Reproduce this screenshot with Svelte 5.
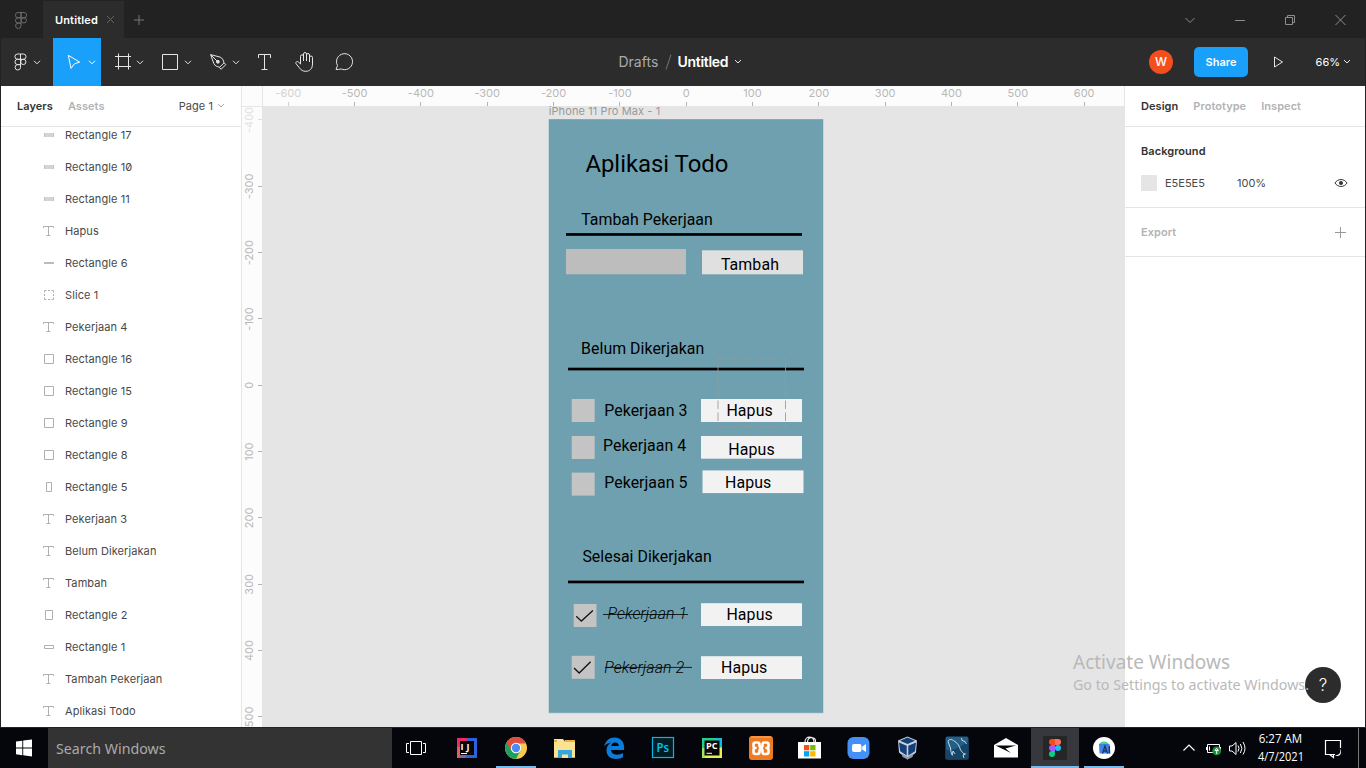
<script>
  const layers = [
    ['flat', 'Rectangle 17'], ['flat', 'Rectangle 10'], ['flat', 'Rectangle 11'], ['text', 'Hapus'],
    ['line', 'Rectangle 6'], ['slice', 'Slice 1'], ['text', 'Pekerjaan 4'], ['square', 'Rectangle 16'],
    ['square', 'Rectangle 15'], ['square', 'Rectangle 9'], ['square', 'Rectangle 8'], ['tall', 'Rectangle 5'],
    ['text', 'Pekerjaan 3'], ['text', 'Belum Dikerjakan'], ['text', 'Tambah'], ['portrait', 'Rectangle 2'],
    ['wide', 'Rectangle 1'], ['text', 'Tambah Pekerjaan'], ['text', 'Aplikasi Todo']
  ];
  const step = 66.33;
  const hTicks = Array.from({ length: 13 }, (_, i) => ({ label: (i - 6) * 100, pos: 686.2 + (i - 6) * step }));
  const vTicks = Array.from({ length: 10 }, (_, i) => ({ label: (i - 4) * 100, pos: 385.3 + (i - 4) * step }));

  const boxes = [
    [566, 249, 120, 25.3, '#bdbdbd'], [702, 250.3, 101, 24, '#e0e0e0'],
    [571.7, 399, 23, 23, '#c4c4c4'], [701, 399, 101, 23, '#f2f2f2'],
    [571.7, 436, 23, 23, '#c4c4c4'], [701, 436, 101, 22.7, '#f2f2f2'],
    [571.7, 472.6, 23, 23, '#c4c4c4'], [702.5, 470.4, 101, 22.7, '#f2f2f2'],
    [573.7, 604, 22.8, 23, '#c4c4c4'], [701, 603.2, 101, 22.8, '#f2f2f2'],
    [571.7, 655.8, 23, 23, '#c4c4c4'], [701, 656.2, 101, 22.8, '#f2f2f2'],
    [566, 233.1, 236, 2.7, '#000'], [568, 367.7, 236, 2.7, '#000'], [568, 580.6, 236, 2.7, '#000']
  ];
  const labels = [
    ['Tambah Pekerjaan', 581.2, 225.2, 131.6], ['Tambah', 720.9, 270.4, 58],
    ['Belum Dikerjakan', 581.1, 354.4, 123.2], ['Pekerjaan 3', 604.3, 416.4, 83.1],
    ['Pekerjaan 4', 603, 450.8, 83.1], ['Pekerjaan 5', 604.3, 488, 83.1],
    ['Hapus', 726.4, 415.5, 46.3], ['Hapus', 728.3, 454.9, 46.3], ['Hapus', 725, 487.5, 46.3],
    ['Selesai Dikerjakan', 582.4, 562.4, 129.3], ['Hapus', 726.4, 619.5, 46.3], ['Hapus', 721, 672.6, 46.3]
  ];
  const apps = ['idea', 'chrome', 'explorer', 'edge', 'ps', 'pycharm', 'xampp', 'store', 'zoom', 'vbox', 'mysql', 'mail', 'figma', 'studio'];
</script>

{#snippet figmaLine(x, y)}
  <g transform="translate({x} {y})">
    <path d="M6 .5H3.1a2.6 2.6 0 0 0 0 5.3H6zM6 .5h2.9a2.6 2.6 0 0 1 0 5.3H6zM6 5.8H3.1a2.6 2.6 0 0 0 0 5.3H6zM6 11.1H3.1A2.7 2.7 0 1 0 6 13.8z" />
    <circle cx="8.8" cy="8.4" r="2.65" />
  </g>
{/snippet}
{#snippet chev(x, y)}<path d="M{x} {y}l3 3 3-3" />{/snippet}

<div class="screen">
  <div class="tabs">
    <svg class="logo" width="42" height="38">{@render figmaLine(15, 12)}</svg>
    <div class="tab"><span>Untitled</span><svg width="9" height="9"><path d="M1 1l7 7M8 1l-7 7" /></svg></div>
    <svg class="plus" width="30" height="38"><path d="M10 20h10M15 15v10" /></svg>
    <svg class="win" width="200" height="38">
      <path d="M19.5 18l4.5 4.5 4.5-4.5M69 20.5h10M119.5 17.5h7v7h-7zM121.5 17.5v-2h7v7h-2M169.5 15l10 10M179.5 15l-10 10" />
    </svg>
  </div>

  <div class="tools">
    <svg width="52" height="48">{@render figmaLine(13.5, 15.5)}{@render chev(33, 22.8)}</svg>
    <svg class="on" width="48" height="48"><path d="M15.3 17.3l11.4 6.8-5.3 1.7-3.4 4.6z" />{@render chev(36, 22.8)}</svg>
    <svg width="48" height="48"><path d="M14 18.5h16M14 28.5h16M17.5 15.5v16M27.5 15.5v16" />{@render chev(36, 22.8)}</svg>
    <svg width="48" height="48"><path d="M13.5 16.5h15v15h-15z" />{@render chev(36, 22.8)}</svg>
    <svg width="48" height="48">
      <path d="M13.600 16.600l9.500 2.500c2.400.9 3.400 3.200 3.900 5.800l-4.300 4.300c-2.600-.4-5-1.500-5.900-3.700zM14 17l6 6M27.100 24.900l1.700 1.700-4.700 4.700-1.700-1.900" />
      <circle cx="20.900" cy="23.800" r="1.400" class="dot" />{@render chev(36, 22.8)}
    </svg>
    <svg width="40" height="48"><path d="M13.500 20v-3.500h12v3.500M19.500 16.500v15M16.500 31.500h6" /></svg>
    <svg width="40" height="48">
      <path d="M15.500 26v-7.700a1.400 1.400 0 0 1 3 0V23v-7a1.400 1.400 0 0 1 3 0V23v-6a1.400 1.400 0 0 1 3 0V24v-4.500a1.400 1.400 0 0 1 3 0v6.500c0 4.700-2.800 7.300-6.700 7.300-3 0-4.600-1.100-6.200-3.200l-3.600-4.500c-.8-1.700 1.200-2.700 2.500-1.500z" />
    </svg>
    <svg width="40" height="48"><path d="M11 31.500l1.500-4a8 8 0 1 1 3.600 3.400c-1.700.6-3.400.7-5.100.6z" /></svg>
    <div class="crumb">
      <span class="drafts">Drafts</span>
      <svg width="7" height="16"><path d="M1 15.500L6 .5" /></svg>
      <b>Untitled</b>
      <svg class="cc" width="8" height="6">{@render chev(1, 1)}</svg>
    </div>
    <div class="right">
      <span class="avatar">W</span>
      <span class="share">Share</span>
      <svg class="play" width="11" height="14"><path d="M1.500 2l8 5-8 5z" /></svg>
      <span class="pct">66%</span>
      <svg width="8" height="6">{@render chev(1, 1)}</svg>
    </div>
  </div>

  <div class="main">
    <div class="left">
      <div class="head"><b>Layers</b><b class="dim">Assets</b><span>Page 1</span><svg width="8" height="6">{@render chev(1, 1)}</svg></div>
      <div class="list">
        {#each layers as [kind, name]}
          <div class="row">
            <svg width="12" height="12">
              {#if kind === 'flat'}<path class="f" d="M1 4h10v4H1z" /><path class="s" d="M1 4h1v4H1zM10 4h1v4h-1z" />
              {:else if kind === 'text'}<path d="M.5 3V1.500h10V3M5.500 1.500v9M3.500 10.500h4" />
              {:else if kind === 'line'}<path class="e" d="M1 5h10v2H1z" />
              {:else if kind === 'slice'}<path d="M1.500 3.500v-2h2M8.500 1.500h2v2M10.500 8.500v2h-2M3.500 10.500h-2v-2M5 1.500h2M5 10.500h2M1.500 5v2M10.500 5v2" />
              {:else if kind === 'square'}<path d="M1.500 1.500h9v9h-9z" />
              {:else if kind === 'tall'}<path d="M3.500 1.500h5v9h-5z" />
              {:else if kind === 'portrait'}<path d="M2.500 1.500h7v9h-7z" />
              {:else}<path d="M1.500 4.500h9v3h-9z" />{/if}
            </svg>
            <span class:zero={name.endsWith('10')}>{name}</span>
          </div>
        {/each}
      </div>
    </div>

    <svg class="canvas" width="883" height="641" viewBox="242 86 883 641">
      <rect x="242" y="86" width="883" height="641" fill="#e5e5e5" />
      <rect x="548.5" y="119" width="275" height="594.3" fill="#a9c5cc" />
      <rect x="549" y="119.300" width="274" height="593.400" fill="#6fa0af" />
      <text x="548.700" y="115" class="inter" fill="#999" textLength="111.500">iPhone 11 Pro Max - 1</text>
      {#each boxes as [x, y, w, h, fill]}<rect {x} {y} width={w} height={h} {fill} />{/each}
      <text x="585.400" y="172" font-size="23.900" textLength="143">Aplikasi Todo</text>
      {#each labels as [t, x, y, w]}<text {x} {y} textLength={w}>{t}</text>{/each}
      <text x="607.500" y="618.600" class="done" textLength="79.500">Pekerjaan 1</text>
      <text x="604.200" y="672.500" class="done" textLength="80">Pekerjaan 2</text>
      <path d="M603 614.500h85M605 667.400h87" stroke="#000" stroke-width=".8" />
      <path d="M576.200 616.200l5.200 4.900 11.500-10.500M574 668l5.200 5 11.400-11.300" fill="none" stroke="#111" stroke-width="1.300" />
      <path d="M718 358.500h68M718 426.500h68" stroke="#999" stroke-opacity=".75" stroke-width=".8" stroke-dasharray="7.500 5.500" />
      <path d="M718 358.500v68M785.500 358.500v68" stroke="#999" stroke-opacity=".85" stroke-width="1" stroke-dasharray="8.500 3.500" stroke-dashoffset="6" />

      <rect x="242" y="86" width="882" height="20" fill="#fcfcfc" />
      <rect x="242" y="86" width="20" height="641" fill="#fcfcfc" />
      <path d="M242 106.500h21M262.500 86v20M1124.500 86v641" stroke="#e5e5e5" />
      {#each hTicks as t, i}
        <rect x={Math.floor(t.pos)} y="102" width="1" height="4" fill="#b3b3b3" opacity={i ? 1 : 0.6} />
        <text class="ruler" x={t.pos} y="97.200" text-anchor="middle" opacity={i ? 1 : 0.6}>{t.label}</text>
      {/each}
      {#each vTicks as t, i}
        <rect x="258" y={Math.floor(t.pos)} width="4" height="1" fill="#b3b3b3" opacity={i ? 1 : 0.4} />
        <text class="ruler" transform="translate(253.300 {t.pos}) rotate(-90)" text-anchor="middle" opacity={i ? 1 : 0.4}>{t.label}</text>
      {/each}
    </svg>

    <div class="props">
      <div class="head"><b>Design</b><b class="dim">Prototype</b><b class="dim">Inspect</b></div>
      <div class="bg">
        <b>Background</b>
        <div class="fill">
          <i></i><span class="hex">E5E5E5</span><span>100%</span>
          <svg width="14" height="10"><path d="M1 5c2.700-4.600 9.300-4.600 12 0-2.700 4.600-9.300 4.600-12 0z" fill="none" stroke="#333" /><circle cx="7" cy="5" r="2" fill="#333" /></svg>
        </div>
      </div>
      <div class="export"><b>Export</b><svg width="11" height="11"><path d="M0 5.500h11M5.500 0v11" stroke="#999" /></svg></div>
    </div>
  </div>

  <div class="taskbar">
    <svg width="48" height="40"><path d="M16 13.600l6.300-.9v6.800H16zM23.200 12.600l8.800-1.100v8H23.200zM16 20.400h6.300v6.800l-6.300-.9zM23.200 20.400H32v8l-8.800-1.100z" fill="#fff" /></svg>
    <svg class="search" width="344" height="40"><text x="8" y="25.700" textLength="109.500" lengthAdjust="spacingAndGlyphs">Search Windows</text></svg>
    <svg width="50" height="40" fill="none" stroke="#fff"><path d="M18.500 13.500h11v13h-11zM17 15.500h-2.500v9H17M31 15.500h2.500v9H31" /></svg>
    {#each apps as app}
      <svg class="app" class:active={app === 'figma'} width="48" height="40" viewBox="0 0 48 40">
        {#if app === 'idea'}
          <path d="M14 10h20v20H14z" fill="#2d62dc" /><path d="M14 10h11l-4 8-7 4z" fill="#ee2a64" /><path d="M14 19h8v11h-8z" fill="#d9645e" /><path d="M18 26h7l-4 4h-5z" fill="#9558a8" />
          <rect x="17" y="13" width="14" height="14" fill="#070707" /><text x="17.500" y="21.700" class="logo-text" textLength="9">IJ</text><path d="M18 25.500h6" stroke="#fff" />
        {:else if app === 'chrome'}
          <circle cx="24" cy="20" r="11" fill="#fbc94b" /><path d="M14.500 14.500A11 11 0 0 0 24 31l4.500-8.500-4.500-2.500z" fill="#1aa15e" /><path d="M14.500 14.500A11 11 0 0 1 34 15.400H24l-5 7z" fill="#dc5044" />
          <circle cx="24" cy="20" r="5.200" fill="#fff" /><circle cx="24" cy="20" r="4.200" fill="#4c8bf5" />
        {:else if app === 'explorer'}
          <path d="M13 11h9l1.500 2H34v17H13z" fill="#fce391" /><path d="M13 12h3v2h-3zM24 12h10v2H23z" fill="#e6b341" /><path d="M17 22h14v8h-4v-3.500h-6V30h-4z" fill="#34a7df" /><path d="M13 29h4v1h-4zM31 29h3v1h-3z" fill="#d9a93c" />
        {:else if app === 'edge'}
          <path d="M14 18.500C15.500 12.800 19.500 9.500 24.600 9.500c6 0 9.500 4.500 9.500 9.500v3H21c.2 3 2.700 4.700 6 4.700 2.300 0 4.300-.600 6-1.600v4.200c-2 1.100-4.300 1.600-7 1.600-5.500 0-9.500-3.200-9.500-8.500 0-3.300 1.700-6 4.600-7.800-2.700.300-5 1.500-7.100 3.900zM21.200 18h7.600c0-2.300-1.300-3.600-3.700-3.600-2.100 0-3.500 1.400-3.900 3.600z" fill="#0c7cdb" />
        {:else if app === 'ps'}
          <rect x="13.500" y="9.500" width="21" height="20" fill="#001d26" stroke="#00b9e6" stroke-width="1.200" /><text x="17.500" y="24" class="ps" textLength="12.500" lengthAdjust="spacingAndGlyphs">Ps</text>
        {:else if app === 'pycharm'}
          <path d="M14 10h20v20H14z" fill="#21d08a" /><path d="M28 10h6v10h-6z" fill="#12bce7" /><path d="M34 19v11H14l5-5z" fill="#e8f04a" /><path d="M14 20h4l-1 10h-3z" fill="#9de75b" />
          <rect x="16.500" y="12.500" width="15" height="15" fill="#070707" /><text x="18" y="21.300" class="logo-text" textLength="11.500" lengthAdjust="spacingAndGlyphs">PC</text><path d="M18.500 25.300h5.500" stroke="#fff" />
        {:else if app === 'xampp'}
          <rect x="12" y="8" width="24" height="24" rx="3" fill="#ee7b22" /><path d="M14 9h20" stroke="#ffb36e" />
          <path d="M18.500 14.500h2q2 0 2 2v2h3v-2q0-2 2-2h2q2 0 2 2v1.500q0 2-2 2 2 0 2 2V24q0 2-2 2h-2q-2 0-2-2v-2h-3v2q0 2-2 2h-2q-2 0-2-2v-2q0-2 2-2-2 0-2-2v-1.500q0-2 2-2z" fill="#ee7b22" stroke="#fff" stroke-width="2.600" stroke-linejoin="round" /><path d="M22 18.500h4v3.500h-4z" fill="#fff" />
        {:else if app === 'store'}
          <path d="M12 14h23v16.500H12z" fill="#fff" /><path d="M19 14c0-6.500 9-6.500 9 0M21.500 14c0-6.500 9-5.500 8 0" fill="none" stroke="#eee" stroke-width="1.200" />
          <path d="M18 17h5.300v5.300H18z" fill="#f25022" /><path d="M24.200 17h5.300v5.300h-5.300z" fill="#7fba00" /><path d="M18 23.200h5.300v5.300H18z" fill="#00a4ef" /><path d="M24.200 23.200h5.300v5.300h-5.300z" fill="#ffb900" />
        {:else if app === 'zoom'}
          <rect x="12.500" y="9" width="22" height="22" rx="6" fill="#4590f7" /><rect x="17" y="16" width="9.500" height="8" rx="2" fill="#fff" /><path d="M27.200 18.800L31 16v8l-3.800-2.600z" fill="#fff" />
        {:else if app === 'vbox'}
          <path d="M23.500 8.500l9.500 4-1 12-8.500 7-8.500-7-1-12z" fill="#c8d1e0" /><path d="M23.500 9.500l7.500 3.200-7.500 3.300-7.500-3.300zM15 14.500l7.700 3.300v9.700l-6.500-4.300zM24.300 17.800l7.700-3.300-1 8.700-6.700 4.300z" fill="#143f78" /><path d="M17.500 25.500l6 3.500 6-3.500-1 3.500-5 2.500-5-2.500z" fill="#8e96a8" />
        {:else if app === 'mysql'}
          <rect x="12.500" y="8.500" width="23" height="23" rx="2" fill="#235f87" /><path d="M12.500 22c8 1 15-3 23-9v18.500h-23z" fill="#164568" />
          <path d="M19.500 27.500l-1.500-3.500-.5-4-2-5c-1.300-3.500 2-4.500 5-2.500 3.500 2 6 5 7 9.500l3 3.500 2 .5-2.500 1 1 3M22 26l-2-3-1 4M28.500 10l.5 2.500 3 1 1.500 2.500" fill="none" stroke="#d6e4ed" stroke-width=".9" />
        {:else if app === 'mail'}
          <path d="M12 17l12-7 12 7v12.500H12z" fill="#fff" /><path d="M13.500 17.500H34L23.500 20.500l5.500 4.500z" fill="#05060b" />
        {:else if app === 'figma'}
          <rect x="12" y="8" width="24" height="24" rx="1.500" fill="#262626" />
          <path d="M24 11h-3a3 3 0 0 0 0 6h3z" fill="#f24e1e" /><path d="M24 11h3a3 3 0 0 1 0 6h-3z" fill="#ff7262" /><path d="M24 17h-3a3 3 0 0 0 0 6h3z" fill="#a259ff" /><circle cx="27" cy="20" r="3" fill="#1abcfe" /><path d="M24 23h-3a3 3 0 1 0 3 3z" fill="#0acf83" />
        {:else}
          <circle cx="24" cy="20" r="11" fill="#fff" /><path d="M19 17a5 3.600 0 0 1 10 0z" fill="#3ddc84" /><path d="M19 16h10.500l1 9.500H19.500z" fill="#3f82e8" /><path d="M22.500 25.500l2.500-7.500 2.500 7.500M23.300 23h3.400M29.300 18v7.500" fill="none" stroke="#173a63" stroke-width="1.300" />
        {/if}
        {#if app === 'chrome' || app === 'studio'}<rect x="4" y="38" width="40" height="2" fill="#76b9ed" />{/if}
        {#if app === 'figma'}<rect y="38" width="48" height="2" fill="#76b9ed" />{/if}
      </svg>
    {/each}
    <svg class="tray" width="82" height="40" fill="none" stroke="#fff">
      <path d="M15.500 22.500l5.500-5.500 5.500 5.500" stroke-width="1.200" />
      <path d="M39.500 16.500h12v8h-12zM38.500 19v3M52.500 19v3M41.500 18.500v4" /><circle cx="48.700" cy="22.900" r="4.400" fill="#17913b" stroke="none" /><path d="M48.700 26v-3.500M47 22.500l1.700-2.200 1.700 2.200z" />
      <path d="M61.500 18v5h2.500l4 3.500v-12L64 18zM70 17.500q2 2.700 0 6M72.400 16q3 4.500 0 9M75 14q4 6.500 0 12.500" />
    </svg>
    <svg class="clock" width="64" height="40">
      <text x="9.700" y="15" textLength="43.500" lengthAdjust="spacingAndGlyphs">6:27 AM</text><text x="9" y="32.500" textLength="46" lengthAdjust="spacingAndGlyphs">4/7/2021</text>
    </svg>
    <svg width="46" height="40" fill="none" stroke="#fff"><path d="M22 26.500H12.500v-14h15V20M16.500 26.500l4 3v-3" stroke-width="1.200" /><path d="M26.500 20.500c2 3.500.200 7-4.500 6.500 2.500 2.500 6 .5 6-3 0-1.500-.5-2.700-1.500-3.500z" fill="#fff" stroke="none" /><path d="M45.500 0v40" stroke="#777" /></svg>
  </div>

  <div class="help">?</div>
  <svg class="watermark" width="245" height="50">
    <text x="1" y="20" font-size="19.500" textLength="157" lengthAdjust="spacingAndGlyphs">Activate Windows</text>
    <text x="1" y="41" font-size="14.500" textLength="236" lengthAdjust="spacingAndGlyphs">Go to Settings to activate Windows.</text>
  </svg>
</div>

<style>
  :global(body) { margin: 0; overflow: hidden; }
  .screen { position: relative; width: 1366px; height: 768px; overflow: hidden; display: flex; flex-direction: column; background: #222; font: 11px/16px Inter, sans-serif; letter-spacing: 0.055px; color: #333; }
  svg { display: block; flex: none; }
  b { font-weight: 600; }
  .tabs { height: 38px; display: flex; background: #222; }
  .tabs svg { fill: none; stroke: #777; }
  .tabs .logo { margin-right: 1px; stroke: #6c6c6c; }
  .tab { width: 81px; margin-top: 1px; box-sizing: border-box; padding: 0 9px 0 12px; display: flex; align-items: center; justify-content: space-between; background: #2c2c2c; color: #fff; font-weight: 600; letter-spacing: 0.15px; }
  .tab svg { stroke: #666; }
  .tabs .win { margin-left: auto; margin-right: 0; stroke: #8d8d8d; }
  .tools { height: 48px; display: flex; margin: 0 1px; background: #2c2c2c; color: #fff; }
  .tools svg { fill: none; stroke: #e5e5e5; }
  .tools .on { background: #18a0fb; stroke: #fff; }
  .tools .dot { fill: #e5e5e5; }
  .crumb { display: flex; align-items: center; margin-left: 253.500px; font-size: 14px; letter-spacing: 0; }
  .crumb .drafts { color: #aaa; width: 46.500px; }
  .crumb b { font-weight: 600; margin-left: 5.500px; width: 52px; letter-spacing: -0.300px; }
  .tools .crumb svg { stroke: #777; }
  .tools .crumb .cc { stroke: #e5e5e5; margin-left: 4px; }
  .right { margin-left: auto; display: flex; align-items: center; padding-right: 14px; }
  .avatar { width: 24px; height: 24px; line-height: 24px; border-radius: 50%; text-align: center; background: #f24e1e; font-size: 12px; font-weight: 500; margin-right: 21px; }
  .share { width: 54px; height: 30px; line-height: 30px; border-radius: 5px; text-align: center; background: #18a0fb; font-weight: 600; }
  .play { margin: 0 31.500px 0 25px; }
  .pct { width: 27.500px; }
  .main { height: 641px; display: flex; margin: 0 1px; background: #fff; }
  .left { width: 240px; border-right: 1px solid #e5e5e5; display: flex; flex-direction: column; }
  .head { height: 40px; flex: none; display: flex; align-items: center; padding: 0 16px; gap: 15px; border-bottom: 1px solid #e5e5e5; }
  .left .head span { margin-left: auto; margin-right: -11px; color: #4a4a4a; }
  .head svg { fill: none; stroke: #aaa; }
  .head .dim { color: #b3b3b3; }
  .list { flex: 1; min-height: 0; overflow: hidden; }
  .list .row:first-child { margin-top: -8px; }
  .row { height: 32px; display: flex; align-items: center; gap: 10px; padding-left: 42px; letter-spacing: 0.080px; color: #484848; }
  .row svg { fill: none; stroke: #b0b0b0; }
  .row .f { fill: #d4d4d4; stroke: none; }
  .row .s { fill: #c2c2c2; stroke: none; }
  .row .e { fill: #bbb; stroke: none; }
  .zero { font-feature-settings: 'zero'; }
  .canvas { font: 15.900px Roboto, sans-serif; letter-spacing: 0; }
  .inter { font: 11px Inter, sans-serif; }
  .ruler { font: 11px Inter, sans-serif; fill: #b8b8b8; }
  .done { font-weight: 300; font-style: italic; }
  .props { flex: 1; }
  .bg { height: 80px; border-bottom: 1px solid #e5e5e5; padding: 0 16px; display: flex; flex-direction: column; justify-content: center; gap: 16px; }
  .fill { display: flex; align-items: center; color: #4a4a4a; letter-spacing: 0; }
  .fill i { width: 16px; height: 16px; background: #e5e5e5; margin-right: 8px; border-radius: 1px; }
  .hex { width: 72px; }
  .fill svg { margin-left: auto; margin-right: 1px; }
  .export { height: 48px; border-bottom: 1px solid #e5e5e5; display: flex; align-items: center; justify-content: space-between; padding: 0 19px 0 16px; color: #b3b3b3; }
  .taskbar { height: 40px; border-top: 1px solid #222228; display: flex; background: #04060b; font-family: 'Open Sans', sans-serif; letter-spacing: 0; }
  .search { background: #333; font: 15px 'Noto Sans', sans-serif; fill: #aaa; }
  .app { margin-left: 1px; }
  .active { background: #36383d; }
  .logo-text { font: 700 9px 'Open Sans', sans-serif; fill: #fff; }
  .ps { font: 600 13px 'Open Sans', sans-serif; fill: #00c8f5; }
  .tray { margin-left: 40px; }
  .clock { fill: #fff; font-size: 12px; margin-left: -1px; }
  .help { position: absolute; left: 1305px; top: 667px; width: 36px; height: 36px; line-height: 36px; border-radius: 50%; background: #2c2c2c; color: #fff; text-align: center; font-size: 17px; font-weight: 300; }
  .watermark { position: absolute; left: 1072px; top: 649px; font-family: 'Noto Sans', sans-serif; letter-spacing: 0; fill: #b9b9b9; }
</style>
